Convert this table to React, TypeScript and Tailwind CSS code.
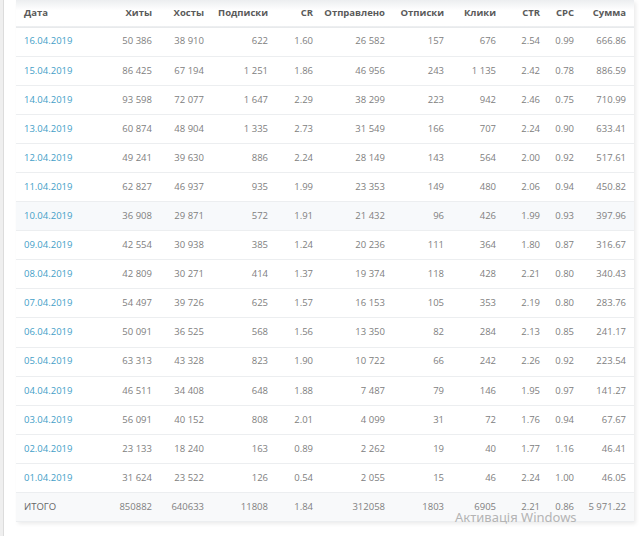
const rows: string[][] = [
  ['16.04.2019', '50 386', '38 910', '622', '1.60', '26 582', '157', '676', '2.54', '0.99', '666.86'],
  ['15.04.2019', '86 425', '67 194', '1 251', '1.86', '46 956', '243', '1 135', '2.42', '0.78', '886.59'],
  ['14.04.2019', '93 598', '72 077', '1 647', '2.29', '38 299', '223', '942', '2.46', '0.75', '710.99'],
  ['13.04.2019', '60 874', '48 904', '1 335', '2.73', '31 549', '166', '707', '2.24', '0.90', '633.41'],
  ['12.04.2019', '49 241', '39 630', '886', '2.24', '28 149', '143', '564', '2.00', '0.92', '517.61'],
  ['11.04.2019', '62 827', '46 937', '935', '1.99', '23 353', '149', '480', '2.06', '0.94', '450.82'],
  ['10.04.2019', '36 908', '29 871', '572', '1.91', '21 432', '96', '426', '1.99', '0.93', '397.96'],
  ['09.04.2019', '42 554', '30 938', '385', '1.24', '20 236', '111', '364', '1.80', '0.87', '316.67'],
  ['08.04.2019', '42 809', '30 271', '414', '1.37', '19 374', '118', '428', '2.21', '0.80', '340.43'],
  ['07.04.2019', '54 497', '39 726', '625', '1.57', '16 153', '105', '353', '2.19', '0.80', '283.76'],
  ['06.04.2019', '50 091', '36 525', '568', '1.56', '13 350', '82', '284', '2.13', '0.85', '241.17'],
  ['05.04.2019', '63 313', '43 328', '823', '1.90', '10 722', '66', '242', '2.26', '0.92', '223.54'],
  ['04.04.2019', '46 511', '34 408', '648', '1.88', '7 487', '79', '146', '1.95', '0.97', '141.27'],
  ['03.04.2019', '56 091', '40 152', '808', '2.01', '4 099', '31', '72', '1.76', '0.94', '67.67'],
  ['02.04.2019', '23 133', '18 240', '163', '0.89', '2 262', '19', '40', '1.77', '1.16', '46.41'],
  ['01.04.2019', '31 624', '23 522', '126', '0.54', '2 055', '15', '46', '2.24', '1.00', '46.05'],
];

const total = ['ИТОГО', '850882', '640633', '11808', '1.84', '312058', '1803', '6905', '2.21', '0.86', '5 971.22'];

const headers = ['Дата', 'Хиты', 'Хосты', 'Подписки', 'CR', 'Отправлено', 'Отписки', 'Клики', 'CTR', 'CPC', 'Сумма'];
const widths = ['w-[84px]', 'w-[60px]', 'w-[52px]', 'w-[64px]', 'w-[45px]', 'w-[72px]', 'w-[59px]', 'w-[52px]', 'w-[44px]', 'w-[34px]', 'w-[52px]'];

export default function App() {
  return (
    <div className="relative flex h-[536px] w-[640px] overflow-hidden bg-white font-['Open_Sans',sans-serif] text-[9.5px]">
      <div className="w-[4px] shrink-0 border-r border-[#dcdcdc] bg-[#efefef]" />
      <div className="w-[12px] shrink-0" />
      <div className="w-[618px] self-start shadow-[2px_2px_4px_rgba(0,0,0,0.08)]">
        <table className="w-full table-fixed border-collapse">
          <colgroup>
            {widths.map((w, i) => <col key={i} className={w} />)}
          </colgroup>
          <thead>
            <tr className="h-[27px] border-b border-[#e8eaec] bg-gradient-to-b from-[#eceef0] to-white to-[40%]">
              {headers.map((h, i) => (
                <th key={h} className={`pr-2 font-bold text-[#5a5a5a] ${i === 0 ? 'pl-2 text-left' : 'text-right'}`}>{h}</th>
              ))}
            </tr>
          </thead>
          <tbody>
            {rows.map((r) => (
              <tr key={r[0]} className={`h-[29.1px] border-b border-[#eceef0] ${r[0] === '10.04.2019' ? 'bg-[#f7f9fb]' : ''}`}>
                {r.map((c, i) => (
                  <td key={i} className={i === 0 ? 'pl-2 text-left text-[#44a0c8]' : 'pr-2 text-right text-[#808080]'}>{c}</td>
                ))}
              </tr>
            ))}
            <tr className="h-[29.1px] border-b border-[#eceef0] bg-[#f8f9fa]">
              {total.map((c, i) => (
                <td key={i} className={i === 0 ? 'pl-2 text-left text-[#666]' : 'pr-2 text-right text-[#808080]'}>{c}</td>
              ))}
            </tr>
          </tbody>
        </table>
      </div>
      <div className="pointer-events-none absolute left-[455px] top-[508px] font-['Noto_Sans',sans-serif] text-[13px] text-[#b4b4b4]">
        Активація Windows
      </div>
    </div>
  );
}
